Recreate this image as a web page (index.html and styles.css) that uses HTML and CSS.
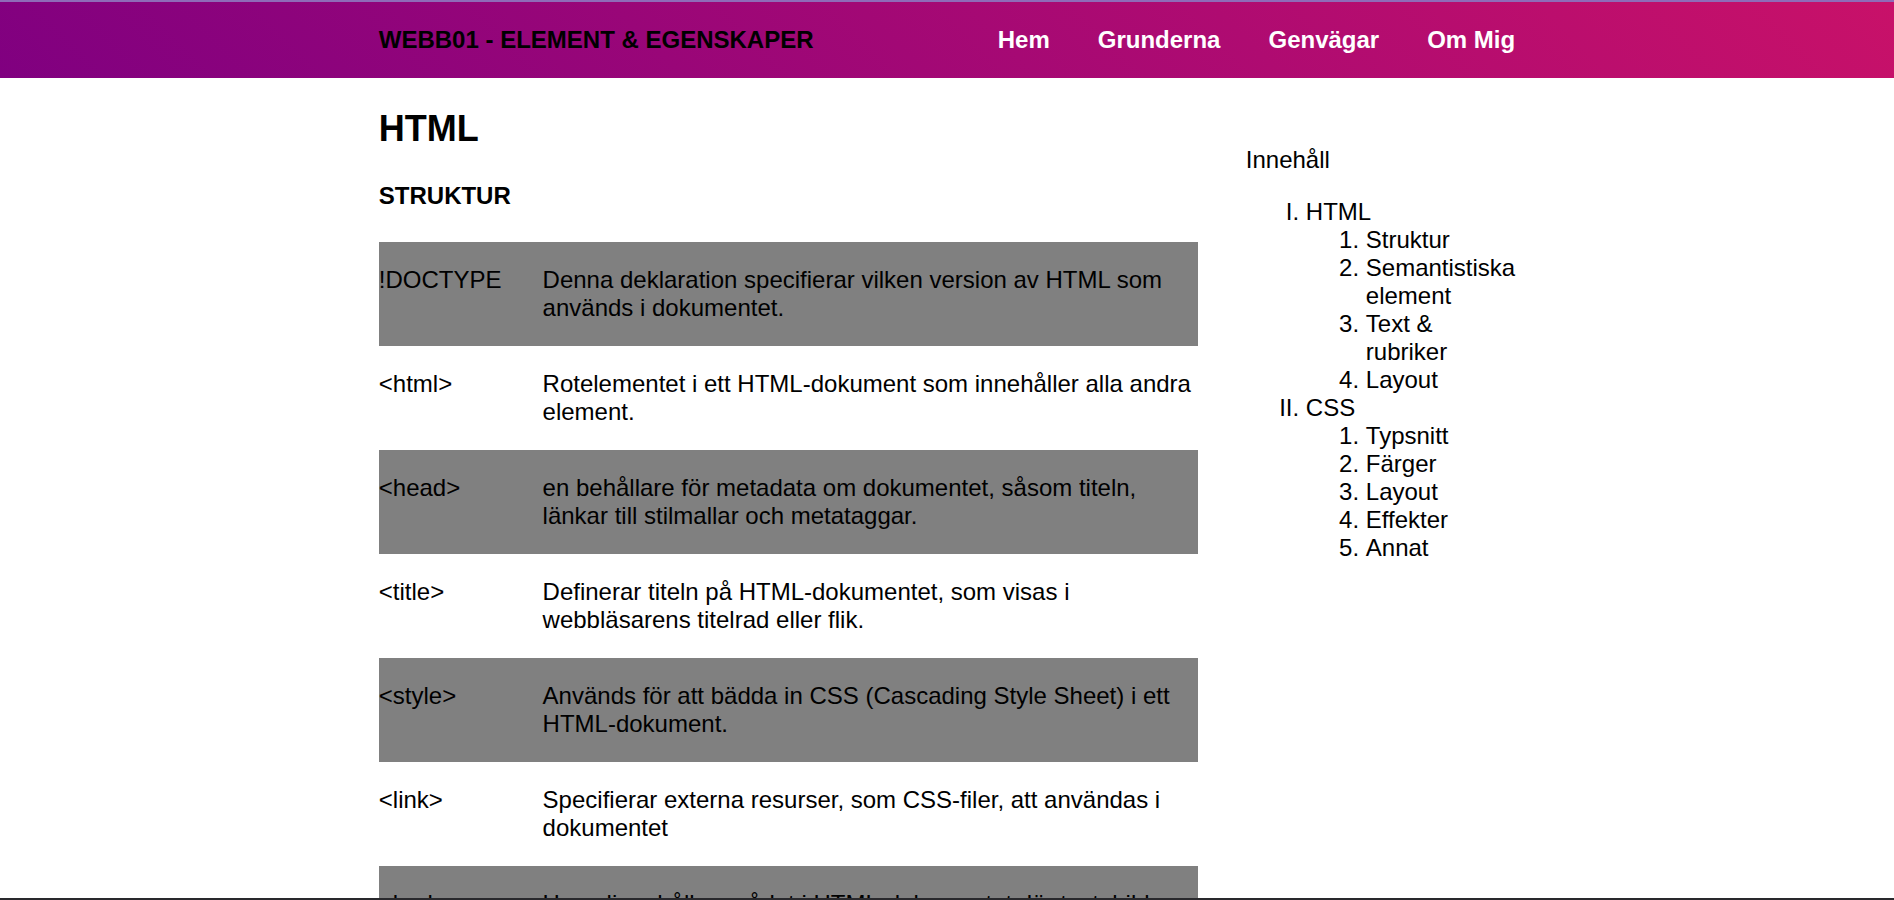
FILE: index.html
```html
<!DOCTYPE html>
<html lang="sv">
<head>
<meta charset="utf-8">
<title>WEBB01 - Element &amp; egenskaper</title>
<link rel="stylesheet" href="styles.css">
</head>
<body>
<header class="site-header">
  <div class="container header-row">
    <h1 class="site-title">WEBB01 - ELEMENT &amp; EGENSKAPER</h1>
    <nav class="site-nav">
      <a href="#">Hem</a>
      <a href="#">Grunderna</a>
      <a href="#">Genvägar</a>
      <a href="#">Om Mig</a>
    </nav>
  </div>
</header>
<div class="page">
  <div class="container content">
    <main class="article">
      <h2 class="section-title">HTML</h2>
      <h3 class="subsection-title">STRUKTUR</h3>
      <dl class="elements">
        <div class="element"><dt>!DOCTYPE</dt><dd>Denna deklaration specifierar vilken version av HTML som används i dokumentet.</dd></div>
        <div class="element"><dt>&lt;html&gt;</dt><dd>Rotelementet i ett HTML-dokument som innehåller alla andra element.</dd></div>
        <div class="element"><dt>&lt;head&gt;</dt><dd>en behållare för metadata om dokumentet, såsom titeln, länkar till stilmallar och metataggar.</dd></div>
        <div class="element"><dt>&lt;title&gt;</dt><dd>Definerar titeln på HTML-dokumentet, som visas i webbläsarens titelrad eller flik.</dd></div>
        <div class="element"><dt>&lt;style&gt;</dt><dd>Används för att bädda in CSS (Cascading Style Sheet) i ett HTML-dokument.</dd></div>
        <div class="element"><dt>&lt;link&gt;</dt><dd>Specifierar externa resurser, som CSS-filer, att användas i dokumentet</dd></div>
        <div class="element"><dt>&lt;body&gt;</dt><dd>Huvudinnehållsområdet i HTML-dokumentet där text, bilder och annat innehåll placeras.</dd></div>
      </dl>
    </main>
    <aside class="toc">
      <p class="toc-title">Innehåll</p>
      <ol class="toc-list">
        <li>HTML
          <ol>
            <li>Struktur</li>
            <li>Semantistiska element</li>
            <li>Text &amp; rubriker</li>
            <li>Layout</li>
          </ol>
        </li>
        <li>CSS
          <ol>
            <li>Typsnitt</li>
            <li>Färger</li>
            <li>Layout</li>
            <li>Effekter</li>
            <li>Annat</li>
          </ol>
        </li>
      </ol>
    </aside>
  </div>
</div>
</body>
</html>
```
FILE: styles.css
```css
* {
  box-sizing: border-box;
}

body {
  display: flex;
  flex-direction: column;
  height: 100vh;
  margin: 0;
  border-top: 2px solid #8f6bb8;
  border-bottom: 2px solid #29292d;
  background: #fff;
  color: #000;
  font-family: Arial, "Liberation Sans", sans-serif;
  font-size: 24px;
  line-height: 28px;
}

.container {
  width: 60%;
  margin: 0 auto;
}

.site-header {
  flex: none;
  padding: 24px 0;
  background: linear-gradient(45deg, #800080, #c81169);
}

.header-row {
  display: flex;
  align-items: center;
  justify-content: space-between;
}

.site-title {
  margin: 0;
  font-size: 24px;
}

.site-nav {
  display: flex;
  gap: 48px;
}

.site-nav a {
  color: #fff;
  font-weight: bold;
  text-decoration: none;
}

.page {
  flex: 1;
  min-height: 0;
  overflow: hidden;
}

.content {
  display: flex;
  gap: 48px;
}

.article {
  flex: 1;
}

.section-title {
  margin: 30px 0;
  font-size: 36px;
  line-height: 42px;
}

.subsection-title {
  margin: 32px 0;
  font-size: 24px;
}

.elements {
  margin: 0;
}

.element {
  display: grid;
  grid-template-columns: 1fr 4fr;
  padding: 24px 0;
}

.element:nth-child(odd) {
  background: #808080;
}

.element dd {
  margin: 0;
}

.toc {
  width: min-content;
  padding-top: 68px;
}

.toc-title {
  margin: 0 0 24px;
}

.toc-list,
.toc-list ol {
  margin: 0;
  padding-left: 60px;
}

.toc-list {
  list-style: upper-roman;
}

.toc-list ol {
  list-style: decimal;
}
```
